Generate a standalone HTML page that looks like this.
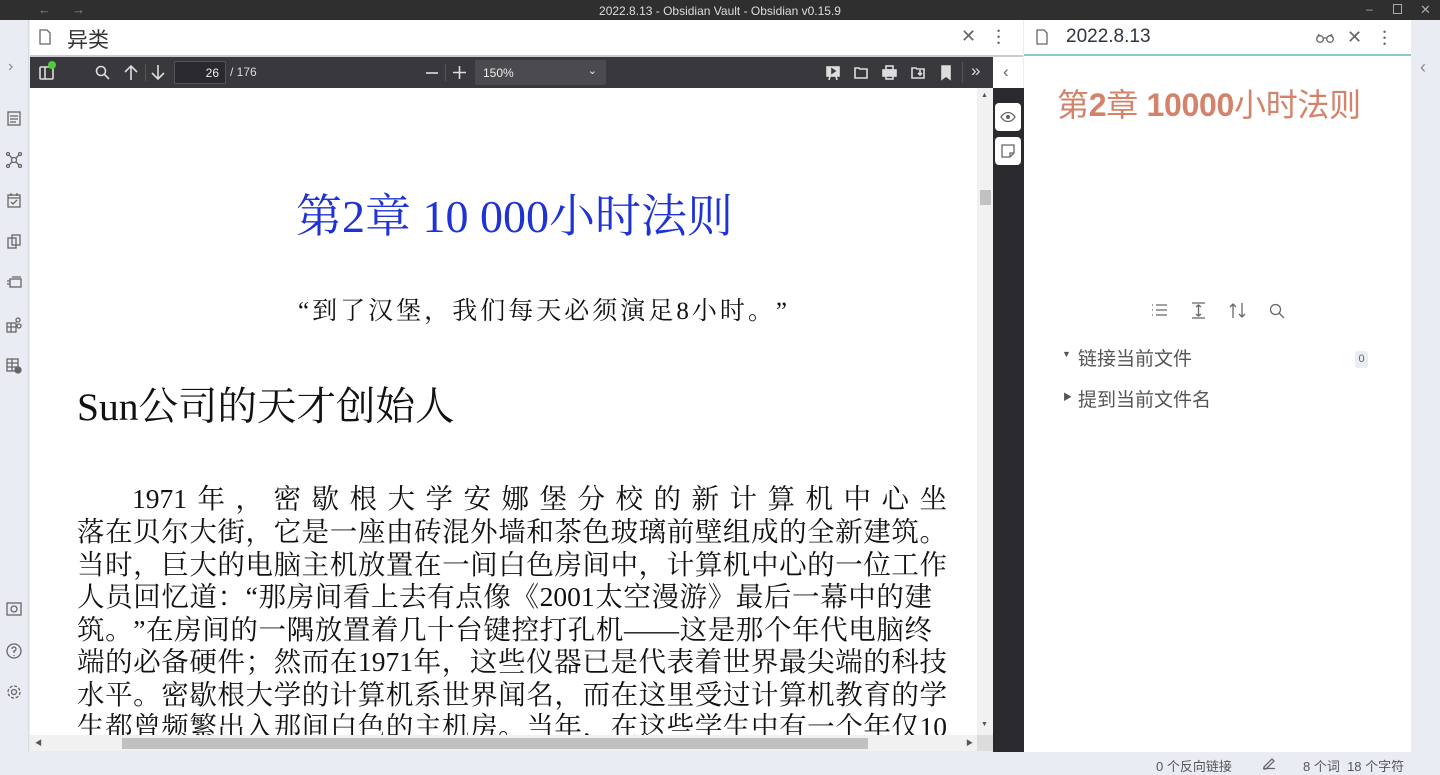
<!DOCTYPE html><html><head><meta charset="utf-8"><style>
*{margin:0;padding:0;box-sizing:border-box}
body{width:1440px;height:773px;overflow:hidden;position:relative;background:#e9edf3;font-family:"Liberation Sans","Noto Sans CJK SC",sans-serif}
.a{position:absolute}
svg{position:absolute;overflow:visible}
.ic{stroke:#666;fill:none;stroke-width:1.3}
.pdf{font-family:"Liberation Serif","Noto Serif CJK SC",serif;color:#111;white-space:nowrap;text-spacing-trim:space-all}
.ln{position:absolute;left:47px;width:870px;font-size:27.5px;line-height:33px;text-align:justify;text-align-last:justify;white-space:normal;height:33px;overflow:hidden;text-spacing-trim:space-all}
.tb svg{stroke:#ddd;fill:none;stroke-width:1.6}
</style></head><body>
<div class="a" style="left:0;top:0;width:1440px;height:20px;background:#2f2f2f"></div>
<div class="a" style="left:38px;top:2px;color:#888;font-size:13px">←</div>
<div class="a" style="left:72px;top:2px;color:#888;font-size:13px">→</div>
<div class="a" style="left:0;top:4px;width:1440px;text-align:center;color:#ddd;font-size:12px">2022.8.13 - Obsidian Vault - Obsidian v0.15.9</div>
<div class="a" style="left:1366px;top:2px;color:#aaa;font-size:12px">–</div>
<div class="a" style="left:1393px;top:4px;width:9px;height:10px;border:1px solid #aaa"></div>
<div class="a" style="left:1420px;top:2px;color:#aaa;font-size:13px">✕</div>

<div class="a" style="left:0;top:20px;width:29px;height:732px;background:#e9edf3;border-right:1px solid #d6dbe2"></div>
<div class="a" style="left:8px;top:58px;color:#888;font-size:16px">›</div>
<svg class="ic" style="left:7px;top:111px" width="14" height="14"><rect x="1" y="1" width="12" height="13"/><path d="M3 5h8M3 8h8M3 11h6"/></svg>
<svg class="ic" style="left:6px;top:152px" width="16" height="16"><circle cx="8" cy="8" r="2.5"/><circle cx="2" cy="2" r="1.5"/><circle cx="14" cy="2" r="1.5"/><circle cx="2" cy="14" r="1.5"/><circle cx="14" cy="14" r="1.5"/><path d="M3 3l3 3M13 3l-3 3M3 13l3-3M13 13l-3-3"/></svg>
<svg class="ic" style="left:7px;top:193px" width="14" height="15"><rect x="1" y="2" width="12" height="12"/><path d="M1 5h12M4 0v3M10 0v3M4 9l2 2 4-4"/></svg>
<svg class="ic" style="left:7px;top:234px" width="14" height="15"><rect x="1" y="4" width="8" height="10"/><rect x="5" y="1" width="8" height="10"/></svg>
<svg class="ic" style="left:6px;top:276px" width="16" height="14"><rect x="4" y="3" width="11" height="8"/><path d="M1 5h3M1 8h3M6 1h9"/></svg>
<svg class="ic" style="left:6px;top:317px" width="16" height="16"><rect x="1" y="6" width="9" height="9"/><path d="M1 10h9M5 6v9"/><circle cx="12" cy="3" r="2"/><circle cx="13" cy="9" r="2"/></svg>
<svg class="ic" style="left:6px;top:358px" width="16" height="16"><rect x="1" y="1" width="11" height="12"/><path d="M1 5h11M1 9h11M6 1v12"/><circle cx="12" cy="12" r="3" fill="#666"/></svg>
<svg class="ic" style="left:6px;top:602px" width="16" height="14"><rect x="1" y="1" width="14" height="12"/><circle cx="8" cy="7" r="3"/></svg>
<svg class="ic" style="left:6px;top:643px" width="16" height="16"><circle cx="8" cy="8" r="7"/><path d="M6 6a2 2 0 1 1 2 2v2M8 12v1"/></svg>
<svg class="ic" style="left:6px;top:684px" width="16" height="16"><circle cx="8" cy="8" r="2.5"/><circle cx="8" cy="8" r="6" stroke-dasharray="3 1.7"/></svg>

<div class="a" style="left:30px;top:20px;width:993px;height:37px;background:#fff;border-bottom:2px solid #ccc"></div>
<svg class="ic" style="left:39px;top:29px" width="12" height="16"><path d="M1 1h7l3 3v11H1z"/></svg>
<div class="a" style="left:67px;top:24px;font-size:21px;color:#333">异类</div>
<div class="a" style="left:961px;top:26px;font-size:18px;color:#666">✕</div>
<div class="a" style="left:997px;top:28px;width:4px;height:18px;color:#666;font-size:9px;line-height:6px">•<br>•<br>•</div>

<div class="a tb" style="left:30px;top:57px;width:963px;height:31px;background:#38383d">
<svg style="left:9px;top:9px" width="14" height="14"><rect x="1" y="1" width="13" height="12" rx="1"/><path d="M6 1v12"/></svg>
<div class="a" style="left:18px;top:4px;width:8px;height:8px;border-radius:50%;background:#4ccd3d"></div>
<svg style="left:65px;top:8px" width="15" height="15"><circle cx="6" cy="6" r="4.5"/><path d="M9.5 9.5l4.5 4.5"/></svg>
<svg style="left:94px;top:8px" width="14" height="15"><path d="M7 15V1M1 7l6-6 6 6"/></svg>
<div class="a" style="left:115px;top:7px;width:1px;height:17px;background:#555"></div>
<svg style="left:121px;top:8px" width="14" height="15"><path d="M7 0v14M1 8l6 6 6-6"/></svg>
<div class="a" style="left:144px;top:4px;width:52px;height:23px;border:1px solid #555;border-radius:2px;background:#2a2a2e;color:#eee;font-size:12px;text-align:right;padding:4px 6px">26</div>
<div class="a" style="left:200px;top:8px;color:#ddd;font-size:12px">/ 176</div>
<svg style="left:396px;top:15px" width="12" height="2"><path d="M0 1h12"/></svg>
<div class="a" style="left:415px;top:7px;width:1px;height:17px;background:#555"></div>
<svg style="left:423px;top:9px" width="13" height="13"><path d="M0 6.5h13M6.5 0v13"/></svg>
<div class="a" style="left:445px;top:3px;width:131px;height:25px;background:#4a4a4f;border-radius:2px;color:#eee;font-size:12px;padding:6px 8px">150%<span style="position:absolute;right:9px;top:4px;font-size:11px">⌄</span></div>
<svg style="left:796px;top:9px" width="14" height="14"><rect x="1" y="1" width="12" height="9" fill="#ddd"/><path d="M6 3l3 2-3 2z" stroke="#38383d" fill="#38383d"/><path d="M4 10l-1 4M10 10l1 4"/></svg>
<svg style="left:824px;top:9px" width="14" height="13"><path d="M1 2h4l1 1h7v9H1z"/></svg>
<svg style="left:852px;top:8px" width="15" height="15"><rect x="4" y="1" width="7" height="4"/><rect x="1" y="5" width="13" height="6" fill="#ddd"/><rect x="4" y="10" width="7" height="4"/></svg>
<svg style="left:881px;top:9px" width="14" height="13"><path d="M1 2h4l1 1h7v9H1zM9 4v5M7 7l2 2 2-2"/></svg>
<svg style="left:911px;top:8px" width="10" height="15"><path d="M1 1h8v13l-4-3-4 3z" fill="#ddd"/></svg>
<div class="a" style="left:932px;top:5px;width:1px;height:21px;background:#555"></div>
<div class="a" style="left:941px;top:4px;color:#ddd;font-size:17px">»</div>
</div>

<div class="a" style="left:30px;top:88px;width:947px;height:647px;background:#fff;overflow:hidden">
<div class="pdf a" style="left:266px;top:92px;font-size:46px;color:#1f33d4">第2章 10 000小时法则</div>
<div class="pdf a" style="left:268px;top:203px;font-size:25px;width:489px;text-align:justify;text-align-last:justify;white-space:normal;height:34px;overflow:hidden">“到了汉堡，我们每天必须演足8小时。”</div>
<div class="pdf a" style="left:47px;top:288px;font-size:39.5px">Sun公司的天才创始人</div>
</div>
<div class="pdf" style="position:absolute;left:30px;top:0;width:947px;height:735px;overflow:hidden">
<div class="ln" style="top:482px;left:102px;width:815px">1971年，密歇根大学安娜堡分校的新计算机中心坐</div>
<div class="ln" style="top:515px">落在贝尔大街，它是一座由砖混外墙和茶色玻璃前壁组成的全新建筑。</div>
<div class="ln" style="top:548px">当时，巨大的电脑主机放置在一间白色房间中，计算机中心的一位工作</div>
<div class="ln" style="top:580px;width:855px">人员回忆道：“那房间看上去有点像《2001太空漫游》最后一幕中的建</div>
<div class="ln" style="top:613px;width:855px">筑。”在房间的一隅放置着几十台键控打孔机——这是那个年代电脑终</div>
<div class="ln" style="top:645px">端的必备硬件；然而在1971年，这些仪器已是代表着世界最尖端的科技</div>
<div class="ln" style="top:678px">水平。密歇根大学的计算机系世界闻名，而在这里受过计算机教育的学</div>
<div class="ln" style="top:710px">生都曾频繁出入那间白色的主机房。当年，在这些学生中有一个年仅10</div>
</div>
<div class="a" style="left:977px;top:88px;width:16px;height:647px;background:#f1f1f1"></div>
<div class="a" style="left:980px;top:190px;width:11px;height:15px;background:#c1c1c1"></div>
<div class="a" style="left:981px;top:92px;font-size:7px;color:#555">▲</div>
<div class="a" style="left:981px;top:721px;font-size:7px;color:#555">▼</div>
<div class="a" style="left:30px;top:735px;width:947px;height:16px;background:#f1f1f1"></div>
<div class="a" style="left:122px;top:738px;width:746px;height:11px;background:#c1c1c1"></div>
<div class="a" style="left:35px;top:738px;font-size:7px;color:#555">◀</div>
<div class="a" style="left:966px;top:738px;font-size:7px;color:#555">▶</div>
<div class="a" style="left:977px;top:735px;width:16px;height:16px;background:#dcdcdc"></div>

<div class="a" style="left:993px;top:57px;width:30px;height:31px;background:#fff"></div>
<div class="a" style="left:1003px;top:62px;color:#666;font-size:17px">‹</div>
<div class="a" style="left:993px;top:88px;width:31px;height:664px;background:#2a2a2e"></div>
<div class="a" style="left:995px;top:103px;width:26px;height:28px;background:#fff;border-radius:4px"></div>
<svg class="ic" style="left:1000px;top:111px" width="16" height="12"><path d="M1 6c4-6 10-6 14 0c-4 6-10 6-14 0z"/><circle cx="8" cy="6" r="1.5" fill="#666"/></svg>
<div class="a" style="left:995px;top:137px;width:26px;height:28px;background:#fff;border-radius:4px"></div>
<svg class="ic" style="left:1001px;top:144px" width="14" height="14"><path d="M1 1h12v8l-4 4H1zM13 9H9v4"/></svg>

<div class="a" style="left:1024px;top:20px;width:387px;height:732px;background:#fff"></div>
<div class="a" style="left:1024px;top:54px;width:387px;height:2px;background:#8fc8c0"></div>
<svg class="ic" style="left:1036px;top:29px" width="12" height="16"><path d="M1 1h7l3 3v11H1z"/></svg>
<div class="a" style="left:1066px;top:26px;font-size:19px;color:#2e3440">2022.8.13</div>
<svg class="ic" style="left:1316px;top:33px" width="18" height="10"><circle cx="4" cy="6" r="3.3"/><circle cx="14" cy="6" r="3.3"/><path d="M7 5h4M1 5l2-4M17 5l-2-4"/></svg>
<div class="a" style="left:1347px;top:27px;font-size:18px;color:#666">✕</div>
<div class="a" style="left:1383px;top:29px;width:4px;color:#666;font-size:9px;line-height:6px">•<br>•<br>•</div>
<div class="a" style="left:1057px;top:80px;font-size:32px;color:#d4826a;letter-spacing:-0.3px">第<b style="font-weight:600">2</b>章 <b style="font-weight:600">10000</b>小时法则</div>
<svg class="ic" style="left:1151px;top:304px" width="16" height="13"><path d="M5 1h11M5 6h11M5 11h11M1 1h1M1 6h1M1 11h1"/></svg>
<svg class="ic" style="left:1191px;top:302px" width="15" height="17"><path d="M1 1h13M1 16h13M7.5 3v11M5 5l2.5-2 2.5 2M5 12l2.5 2 2.5-2"/></svg>
<svg class="ic" style="left:1229px;top:302px" width="17" height="17"><path d="M4 16V2M1 5l3-3 3 3M13 1v14M10 12l3 3 3-3"/></svg>
<svg class="ic" style="left:1269px;top:303px" width="16" height="16"><circle cx="6.5" cy="6.5" r="5"/><path d="M10 10l5 5"/></svg>
<div class="a" style="left:1062px;top:349px;font-size:9px;color:#555">▼</div>
<div class="a" style="left:1078px;top:344px;font-size:19px;color:#555">链接当前文件</div>
<div class="a" style="left:1355px;top:351px;width:13px;height:17px;background:#eaedf1;border-radius:3px;font-size:11px;color:#666;text-align:center;line-height:17px">0</div>
<div class="a" style="left:1063px;top:390px;font-size:9px;color:#555">▶</div>
<div class="a" style="left:1078px;top:385px;font-size:19px;color:#555">提到当前文件名</div>

<div class="a" style="left:1411px;top:20px;width:29px;height:732px;background:#e9edf3"></div>
<div class="a" style="left:1420px;top:57px;color:#888;font-size:18px">‹</div>

<div class="a" style="left:0;top:752px;width:1440px;height:21px;background:#e9edf3"></div>
<div class="a" style="left:1156px;top:756px;font-size:13px;color:#555">0 个反向链接</div>
<svg class="ic" style="left:1262px;top:757px" width="14" height="12"><path d="M2 10l8-8 2 2-8 8H2zM1 11.5h12"/></svg>
<div class="a" style="left:1303px;top:756px;font-size:13px;color:#555">8 个词&nbsp;&nbsp;18 个字符</div>
</body></html>
